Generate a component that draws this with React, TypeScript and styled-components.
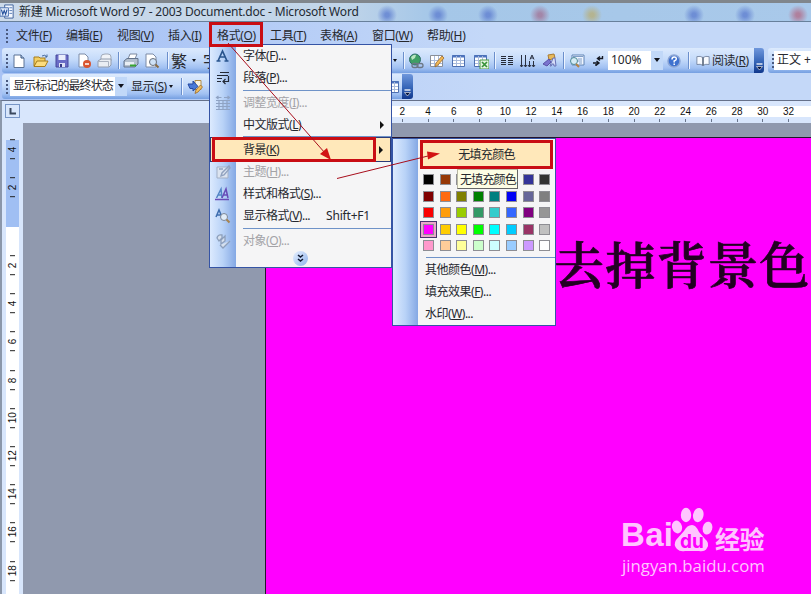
import React from "react";
import styled, { createGlobalStyle } from "styled-components";

const Global = createGlobalStyle`
  * { box-sizing: border-box; }
  body { margin: 0; overflow: hidden; }
`;

const UI = `"Noto Sans", "Noto Sans CJK SC", sans-serif`;

const Window = styled.div`
  position: relative;
  width: 811px;
  height: 594px;
  overflow: hidden;
  display: flex;
  flex-direction: column;
  background: #c4d8f8;
  font: 12px/16px ${UI};
  color: #26282e;
  white-space: nowrap;
`;
const TitleBar = styled.header`
  display: flex;
  align-items: center;
  height: 22px;
  padding: 0 0 1px 0;
  border-top: 3px solid #80868c;
  border-bottom: 1px solid #68809b;
  background:
    radial-gradient(circle at 438px 12px, #6585d2dd 0 2px, transparent 10px),
    radial-gradient(circle at 488px 12px, #6585d2dd 0 2px, transparent 10px),
    radial-gradient(circle at 540px 12px, #a27c9edd 0 2px, transparent 10px),
    radial-gradient(circle at 592px 12px, #b6b184dd 0 2px, transparent 10px),
    radial-gradient(circle at 387px 12px, #6585d2dd 0 2px, transparent 10px),
    radial-gradient(circle at 694px 12px, #6585d2dd 0 2px, transparent 10px),
    radial-gradient(circle at 745px 12px, #6585d2dd 0 2px, transparent 10px),
    radial-gradient(circle at 798px 12px, #b07592dd 0 2px, transparent 10px),
    radial-gradient(ellipse at 646px 12px, #86aace 0 8px, transparent 20px),
    radial-gradient(ellipse at 40px 18px, #e2b7dc 0 4px, transparent 18px),
    radial-gradient(ellipse at 235px 18px, #cebde5 0 4px, transparent 14px),
    linear-gradient(90deg, #ccdaea 0, #c1d5e9 340px, #a5c7e8 430px, #a9c9ea);
`;
const Title = styled.span`
  margin-left: 4px;
  letter-spacing: -0.19px;
  color: #232a33;
`;
const MenuBar = styled.nav`
  display: flex;
  align-items: center;
  height: 26px;
  padding: 1px 0 0 6px;
  background: linear-gradient(90deg, #a2bef4, #c4d8f8 60%);
`;
const Grip = styled.span`
  flex: none;
  width: 2px;
  height: 14px;
  background: repeating-linear-gradient(#4a5a80 0 2px, transparent 2px 4px);
`;
const MenuLabel = styled.span<{ $w: number }>`
  flex: none;
  width: ${(p) => p.$w}px;
  letter-spacing: -0.35px;
`;
const ToolRow = styled.div`
  display: flex;
  height: 26px;
  padding-left: 2px;
  background: linear-gradient(90deg, #a9c3f4, #c4d8f8 60%);
`;
const Band = styled.div<{ $w: number }>`
  flex: none;
  display: flex;
  align-items: center;
  width: ${(p) => p.$w}px;
  height: 25px;
  padding-left: 4px;
  border-radius: 3px 0 0 3px;
  background: linear-gradient(#dceafd, #c5dbfa 45%, #a0c0f2 80%, #759fe1);
`;
const Slot = styled.span<{ $w: number }>`
  flex: none;
  display: flex;
  align-items: center;
  justify-content: center;
  width: ${(p) => p.$w}px;
  height: 24px;
`;
const Divider = styled.span<{ $m?: number }>`
  flex: none;
  width: 1px;
  height: 17px;
  margin: 0 ${(p) => p.$m ?? 2}px;
  background: #6b8fcc;
  box-shadow: 1px 0 #edf4ff;
`;
const Field = styled.span<{ $w: number }>`
  flex: none;
  display: flex;
  align-items: center;
  width: ${(p) => p.$w}px;
  height: 19px;
  margin-bottom: 1px;
  padding-left: 3px;
  background: #fff;
  overflow: hidden;
`;
const DropButton = styled.span`
  flex: none;
  display: flex;
  align-items: center;
  justify-content: center;
  width: 12px;
  height: 19px;
  margin-left: auto;
  background: #c1d8f8;
`;
const Caret = styled.i<{ $s?: number }>`
  border: ${(p) => p.$s ?? 3}px solid transparent;
  border-top: ${(p) => (p.$s ?? 3) + 1}px solid #10131c;
  border-bottom: 0;
`;
const EndCap = styled.span<{ $w: number }>`
  flex: none;
  display: flex;
  align-items: flex-end;
  justify-content: center;
  width: ${(p) => p.$w}px;
  height: 25px;
  padding-bottom: 2px;
  border-radius: 0 3px 3px 0;
  background: linear-gradient(#6f97dc, #3565b7 55%, #10378c);
`;
const Label = styled.span<{ $ls?: number; $w?: number; $size?: number }>`
  flex: none;
  width: ${(p) => (p.$w ? p.$w + "px" : "auto")};
  font-size: ${(p) => p.$size ?? 12}px;
  letter-spacing: ${(p) => p.$ls ?? 0}px;
`;
const RulerRow = styled.div`
  display: flex;
  height: 23px;
  padding: 3px 0 0 4px;
  border-top: 1px solid #66718a;
  border-left: 2px solid #8b97aa;
  background: #d8e6fc;
`;
const TabBox = styled.div`
  flex: none;
  display: flex;
  align-items: center;
  justify-content: center;
  width: 15px;
  height: 14px;
  margin-left: -1px;
  border: 1px solid #7795c6;
`;
const HRuler = styled.div`
  flex: none;
  display: flex;
  margin: 2px 0 0 369.5px;
`;
const HMark = styled.div`
  flex: none;
  display: flex;
  flex-direction: column;
  align-items: center;
  width: 25.75px;
  height: 11px;
  background: #fff;
  font: 10px/11px "Liberation Sans", sans-serif;
  color: #111;
  &::after {
    content: "";
    flex: none;
    width: 1px;
    height: 3px;
    margin-top: 2px;
    background: #69758c;
  }
`;
const Workspace = styled.div`
  flex: 1;
  min-height: 0;
  display: flex;
  background: #9099ae;
`;
const VRuler = styled.aside`
  flex: none;
  width: 23px;
  padding: 17px 4px 0 4px;
  border-left: 2px solid #8b97aa;
  background: #d8e6fc;
`;
const VZone = styled.div<{ $top?: boolean }>`
  display: flow-root;
  height: ${(p) => (p.$top ? 87 : 400)}px;
  padding-top: ${(p) => (p.$top ? 0 : 19)}px;
  width: 13px;
  background: ${(p) => (p.$top ? "#a0bff3" : "#fff")};
`;
const VMark = styled.div<{ $first?: boolean }>`
  display: flex;
  align-items: center;
  justify-content: center;
  width: 13px;
  height: 38.2px;
  margin-top: ${(p) => (p.$first ? "-10px" : 0)};
  writing-mode: vertical-rl;
  transform: rotate(180deg);
  font: 10px/13px "Liberation Sans", sans-serif;
  color: #111;
  background: linear-gradient(#222, #222) 4px 9px / 5px 1px no-repeat,
    linear-gradient(#222, #222) 4px 28px / 5px 1px no-repeat;
`;
const Page = styled.main`
  flex: 1;
  min-width: 0;
  margin: 14px 0 0 242px;
  padding: 90px 0 0 288px;
  border-top: 1px solid #23142c;
  border-left: 1px solid #23142c;
  background: #ff00ff;
`;
const Heading = styled.h1`
  margin: 0;
  font: 600 50px/68px "Noto Serif CJK SC", "Noto Sans CJK SC", serif;
  letter-spacing: 1.3px;
  color: #220022;
  -webkit-text-stroke: 0.7px #220022;
`;

const Popup = styled.section<{ $x: number; $y: number; $w: number; $h: number; $strip: number }>`
  position: absolute;
  left: ${(p) => p.$x}px;
  top: ${(p) => p.$y}px;
  width: ${(p) => p.$w}px;
  height: ${(p) => p.$h}px;
  border: 1px solid #3554a5;
  background: linear-gradient(90deg, #dceafe, #b8d2f7 50%, #84a8e4) 0 0 /
      ${(p) => p.$strip}px 100% no-repeat,
    #f5f5f6;
`;
const MenuItem = styled.div<{ $off?: boolean; $hot?: boolean }>`
  display: flex;
  align-items: center;
  height: ${(p) => (p.$hot ? 23 : 22)}px;
  margin: ${(p) => (p.$hot ? "0 1px 0 1px" : 0)};
  padding-left: ${(p) => (p.$hot ? 0 : 1)}px;
  color: ${(p) => (p.$off ? "#a3a3a7" : "#26282e")};
  background: ${(p) => (p.$hot ? "#ffe8ba" : "transparent")};
  outline: ${(p) => (p.$hot ? "1px solid #2b3b78" : "none")};
  letter-spacing: -0.5px;
`;
const MenuIcon = styled.span`
  flex: none;
  display: flex;
  justify-content: center;
  width: 23px;
  margin-right: 9px;
`;
const Shortcut = styled.span`
  margin-left: 16px;
  letter-spacing: -0.2px;
`;
const SubArrow = styled.i`
  margin: 0 7px 0 auto;
  border: 4px solid transparent;
  border-left: 4px solid #111;
  border-right: 0;
`;
const Rule = styled.hr<{ $m: string }>`
  height: 1px;
  margin: ${(p) => p.$m};
  border: 0;
  background: #6f93c8;
`;
const More = styled.div`
  display: flex;
  align-items: center;
  justify-content: center;
  width: 15px;
  height: 15px;
  margin: -1px 0 0 83px;
  border-radius: 50%;
  background: linear-gradient(135deg, #e6f0ff, #8fb3ec);
`;
const NoFill = styled.div`
  display: flex;
  align-items: center;
  justify-content: center;
  width: 133px;
  height: 29px;
  margin: 1px 0 0 27px;
  background: #ffe8ba;
`;
const Palette = styled.div`
  display: grid;
  grid-template-columns: repeat(8, 16.6px);
  grid-auto-rows: 16.6px;
  margin: 2px 0 0 27px;
`;
const Cell = styled.span<{ $on?: boolean }>`
  display: flex;
  align-items: center;
  justify-content: center;
  width: 17px;
  height: 17px;
  border: ${(p) => (p.$on ? "1px solid #47366e" : "1px solid transparent")};
  background: ${(p) => (p.$on ? "#e9a7c9" : "transparent")};
`;
const Chip = styled.span<{ $c: string }>`
  width: 11px;
  height: 11px;
  border: 1px solid #8e8e94;
  background: ${(p) => p.$c};
`;
const SubItem = styled.div`
  height: 22px;
  padding: 4px 0 0 32px;
  letter-spacing: -0.5px;
`;
const Tooltip = styled.div`
  position: absolute;
  left: 457px;
  top: 169px;
  width: 61px;
  height: 20px;
  padding: 2px 0 0 2px;
  border: 1px solid #b8b8a4;
  border-right-color: #666;
  border-bottom-color: #666;
  background: #fdfde4;
  letter-spacing: -0.8px;
`;
const RedBox = styled.div<{ $x: number; $y: number; $w: number; $h: number }>`
  position: absolute;
  left: ${(p) => p.$x}px;
  top: ${(p) => p.$y}px;
  width: ${(p) => p.$w}px;
  height: ${(p) => p.$h}px;
  border: 3px solid #c90d14;
`;
const Arrows = styled.svg`
  position: absolute;
  left: 0;
  top: 0;
`;
const Watermark = styled.div`
  position: absolute;
  left: 621px;
  top: 503px;
  width: 150px;
  color: #ffc5ff;
`;
const Brand = styled.div`
  display: flex;
  height: 50px;
  align-items: flex-end;
`;
const Bai = styled.span`
  flex: none;
  width: 50px;
  font: 700 33px/36px "Liberation Sans", sans-serif;
  letter-spacing: 0.3px;
`;
const Jing = styled.span`
  margin-left: 1px;
  font: 700 25px/30px "Noto Sans CJK SC", sans-serif;
  letter-spacing: -0.5px;
`;
const Url = styled.div`
  margin: 2px 0 0 1px;
  font: 16.8px/22px "Open Sans", sans-serif;
`;

const Ico = ({ children, s = 16 }: { children: React.ReactNode; s?: number }) => (
  <svg width={s} height={s} viewBox="0 0 16 16" fill="none">{children}</svg>
);
const WordIcon = () => (
  <Ico s={15}>
    <path d="M5 1h9v14H5z" fill="#f4f8ff" stroke="#3c5f99" />
    <path d="M10 4h3M10 7h3M10 10h3" stroke="#5b7fb8" />
    <path d="M0 4h9v9H0z" fill="#e5eefc" stroke="#4a6fae" />
    <path d="m1.500 6 1.500 5 1.500-4L6 11l1.500-5" stroke="#24509b" strokeWidth="1.200" />
  </Ico>
);
const NewIcon = () => (
  <Ico><path d="M3 2h7l3 3v9.500H3z" fill="#fff" stroke="#5b7396" /><path d="M10 2v3h3" fill="#bcd0ee" stroke="#35527d" /></Ico>
);
const OpenIcon = () => (
  <Ico><path d="M1 13V4h5l1 1h5v3" fill="#f3cf62" stroke="#a67c1c" /><path d="M1 13.500 4 8h11l-3 5.500z" fill="#fbdc7e" stroke="#a67c1c" /><path d="M9 3q3-2 5 1m0-2.500V4h-2" stroke="#476a9d" /></Ico>
);
const SaveIcon = () => (
  <Ico><path d="M2 2h12v12H2z" fill="#6a6cc6" stroke="#46489c" /><path d="M4.500 2h7v5h-7z" fill="#e9edfb" /><path d="M5 10h6v4H5z" fill="#dde1f5" /><path d="M6 11h2v3H6z" fill="#343783" /></Ico>
);
const PermIcon = () => (
  <Ico><path d="M3 1h6l3 3v10H3z" fill="#fff" stroke="#7c8ba6" /><circle cx="11" cy="11" r="4" fill="#d9542f" /><path d="M9 11h4" stroke="#fff" strokeWidth="1.500" /></Ico>
);
const MailIcon = () => (
  <Ico><path d="M4 7V4q0-3 4-3h3q3 0 3 3v4" fill="#f0f3f8" stroke="#a0a9b8" /><path d="M1 8l3-2h10v6l-2 2H1z" fill="#e9edf3" stroke="#929cae" /><path d="M1 8.500h10.500V14" stroke="#aab2c0" /></Ico>
);
const PrintIcon = () => (
  <Ico><path d="M5 6 7 1h7l-2 5" fill="#fff" stroke="#7c89a0" /><path d="m1 8 3-2.500h11V11l-3 3H1z" fill="#b3bfce" stroke="#64748d" /><path d="M2 9h9v3H2z" fill="#e9eef4" /><path d="M7 12.500h6" stroke="#37a532" strokeWidth="2" /></Ico>
);
const PreviewIcon = () => (
  <Ico><path d="M2 1h7l3 3v10H2z" fill="#fff" stroke="#7c8ba6" /><circle cx="9" cy="9" r="3.500" fill="#cfe2f6" stroke="#69717e" /><path d="m11.500 11.500 3 3" stroke="#8a6b42" strokeWidth="2" /></Ico>
);
const GlobeIcon = () => (
  <Ico><circle cx="7" cy="6.500" r="5.500" fill="#3f9f64" stroke="#2f6f6c" /><path d="M3 4q3-3 5-2L7 5 4 7z" fill="#b9e6c0" /><rect x="4" y="10.500" width="6" height="4" rx="2" stroke="#6c7785" strokeWidth="1.300" /><rect x="9" y="10.500" width="6" height="4" rx="2" stroke="#6c7785" strokeWidth="1.300" /></Ico>
);
const TableIcon = ({ extra }: { extra?: "pen" | "xls" }) => (
  <Ico>
    <path d="M1.500 2.500h12v11h-12z" fill="#fff" stroke={extra === "pen" ? "#8a8f98" : "#4d6fb0"} />
    {extra !== "pen" && <path d="M1 3.500h13" stroke="#4d74c0" strokeWidth="2" />}
    <path d="M5.500 3v10M9.500 3v10M2 7.500h11M2 10.500h11" stroke="#a9bbdc" />
    {extra === "pen" && <path d="m6 14 1-4 6-7 2 2-6 7z" fill="#f0b855" stroke="#9a6a31" strokeWidth=".8" />}
    {extra === "xls" && <g><path d="M7 7h9v9H7z" fill="#e5f4e1" stroke="#4c9a46" /><path d="m9 9 5 5m0-5-5 5" stroke="#37923a" strokeWidth="1.700" /></g>}
  </Ico>
);
const ColumnsIcon = () => (
  <Ico><path d="M2 3.500h5M2 5.500h5M2 7.500h5M2 9.500h5M2 11.500h5M9 3.500h5M9 5.500h5M9 7.500h5M9 9.500h5M9 11.500h5" stroke="#252a36" strokeWidth="1.200" /></Ico>
);
const DirectionIcon = () => (
  <Ico><path d="M1.500 2v12M5.500 2v12M9.500 8v6M13.500 8v6M10 6.500 12 2l2 4.500M10.500 5h3M0 12l1.500 2L3 12M4 12l1.500 2L7 12M8 12l1.500 2 1.500-2M12 12l1.500 2 1.500-2" stroke="#2b3140" /></Ico>
);
const DrawIcon = () => (
  <Ico><path d="m6 2 6-1 1 4-6 2z" fill="#e7b95b" stroke="#aa7c32" /><path d="m1 11 6-5 2 3-4 4z" fill="#7a73ce" stroke="#5951a5" /><path d="m8 13 3-8h2l1 8h-2l-.3-2H10l-.8 2z" fill="#d5dcf8" stroke="#6770b5" /></Ico>
);
const MapIcon = () => (
  <Ico><path d="M3 2h12v10H3z" fill="#eff5ff" stroke="#6184b5" /><path d="M4 3.500h10M9 6h4M9 8h4M10 10h3" stroke="#809fc8" /><circle cx="5" cy="8" r="3.500" fill="#d5ecf5" stroke="#4b8996" /><path d="m7 11 3 3" stroke="#b48445" strokeWidth="2" /></Ico>
);
const MarkIcon = () => (
  <Ico><path d="M12.500 3v2.500H8M10 3.500 7.500 5.500l2.500 2M3 10h6M6.500 8 9 10l-2.500 2M6 11v2" stroke="#161a24" strokeWidth="1.400" /></Ico>
);
const HelpIcon = () => (
  <Ico><circle cx="8" cy="8" r="6" fill="#3f72cf" stroke="#8ba5d5" strokeWidth="1.500" /><path d="M6 6.500q0-2.500 2.200-2.500T10.300 6Q10.300 7.300 8.200 8v1.500m0 1v1.500" stroke="#fff" strokeWidth="1.500" /></Ico>
);
const BookIcon = () => (
  <Ico s={14}><path d="M8 4Q5 2 1 3v9q4-1 7 1 3-2 7-1V3q-4-1-7 1z" fill="#f7faff" stroke="#70809d" /><path d="M8 4v9" stroke="#35465e" strokeWidth="1.500" /></Ico>
);
const TrackIcon = () => (
  <Ico><path d="M8 1.500h6v9H8z" fill="#f8f3e2" stroke="#b28c45" /><path d="M1 5h5V2l5 5.500L6 12V9.500H3z" fill="#4a7ad8" stroke="#2549a0" /><path d="m8 14.500 1-3.500 4.500-5 2 2-4.500 5z" fill="#f1bf62" stroke="#9b6a24" strokeWidth=".8" /></Ico>
);
const GlyphA = ({ double }: { double?: boolean }) =>
  double ? (
    <Ico><path d="m1.500 12 4.500-9 1 9M3 9h4" stroke="#5284c5" strokeWidth="1.500" /><path d="m7 12 4-9 2 9M8.500 9h4" stroke="#684bb7" strokeWidth="1.500" /><path d="M0 13.500h14" stroke="#684bb7" strokeWidth="1.500" /></Ico>
  ) : (
    <Ico><path d="m3 13 4.500-10L12 13M5 9h5M1.500 13h4M9.500 13h4" stroke="#2a558e" strokeWidth="1.700" /></Ico>
  );
const ParaIcon = () => (
  <Ico><path d="M5 2.500h9M2 5.500h11M2 8.500h5M2 11.500h4M13.500 6v5.500H8M10.500 9 8 11.500l2.500 2.500" stroke="#222936" strokeWidth="1.200" /></Ico>
);
const AdjustIcon = () => (
  <Ico><path d="M1.500 2.500h5M9 2.500h5.500M3.500 1 1.500 2.500 3.500 4M12.500 1l2 1.500-2 1.500M1 5.500h14M1 8.500h14M1 11.500h14M1 14.500h14M4 5v10M8 5v10M12 5v10" stroke="#8fa3c4" strokeWidth="1.200" /></Ico>
);
const ThemeIcon = () => (
  <Ico><path d="M2 3h11v11H2z" fill="#dce4f0" stroke="#a2afc5" /><path d="m6 12 1-3 7-7 1 2-6 7zM4 5h4" stroke="#91a2bf" strokeWidth="1.400" /></Ico>
);
const FormatIcon = () => (
  <Ico><path d="m1 9 3-7 3 7M2 7h4" stroke="#3d6dae" strokeWidth="1.500" /><circle cx="9" cy="9" r="3.500" fill="#e2edf8" stroke="#7c8696" /><path d="m11.500 11.500 3 3" stroke="#a78350" strokeWidth="2" /></Ico>
);
const ObjectIcon = () => (
  <Ico><path d="M2 5q1-4 5-3v3L4 8zM6 7l4-4v5l-4 3zM5 12l3 3 7-7" fill="#d6e0ee" stroke="#8d9fbb" strokeWidth="1.300" /></Ico>
);
const DownChevrons = () => (
  <svg width="7" height="9" viewBox="0 0 7 9" fill="none"><path d="m1 1 2.500 2L6 1M1 5l2.500 2L6 5" stroke="#111a33" strokeWidth="1.500" /></svg>
);
const OptionsMark = () => (
  <svg width="7" height="8" viewBox="0 0 7 8"><path d="M.5 1h6" stroke="#fff" strokeWidth="1.300" /><path d="M.5 3.500h6l-3 3.500z" fill="#06143c" stroke="#fff" strokeWidth=".6" /></svg>
);

const Cmd = ({ t, k, dots }: { t: string; k: string; dots?: boolean }) => (
  <span>{t}(<u>{k}</u>){dots && "..."}</span>
);

const menus: [string, string, number][] = [
  ["文件", "F", 50], ["编辑", "E", 51], ["视图", "V", 51], ["插入", "I", 49], ["格式", "O", 53],
  ["工具", "T", 50], ["表格", "A", 52], ["窗口", "W", 55], ["帮助", "H", 45],
];
const colors = [
  "#000000", "#963706", "#333300", "#003300", "#003366", "#000080", "#333399", "#333333",
  "#800000", "#ff6a10", "#808000", "#008000", "#008080", "#0000f5", "#666699", "#808080",
  "#fa0000", "#ff9d09", "#99cc00", "#339966", "#33cccc", "#3366ff", "#800080", "#969696",
  "#ff00ff", "#ffcc00", "#ffff00", "#00ff00", "#00ffff", "#00ccff", "#993366", "#c0c0c0",
  "#ff99cc", "#ffcc99", "#ffff99", "#ccffcc", "#ccffff", "#99ccff", "#cc99ff", "#ffffff",
];
const hMarks = [2, 4, 6, 8, 10, 12, 14, 16, 18, 20, 22, 24, 26, 28, 30, 32, ""];
const vMarks = [2, 4, 6, 8, 10, 12, 14, 16, 18];

export default function App() {
  return (
    <Window>
      <Global />
      <TitleBar>
        <WordIcon />
        <Title>新建 Microsoft Word 97 - 2003 Document.doc - Microsoft Word</Title>
      </TitleBar>
      <MenuBar>
        <Grip />
        <Slot $w={8} />
        {menus.map(([t, k, w]) => (
          <MenuLabel key={k} $w={w}><Cmd t={t} k={k} /></MenuLabel>
        ))}
      </MenuBar>
      <ToolRow>
        <Band $w={752}>
          <Grip />
          <Slot $w={22}><NewIcon /></Slot>
          <Slot $w={21}><OpenIcon /></Slot>
          <Slot $w={22}><SaveIcon /></Slot>
          <Slot $w={21}><PermIcon /></Slot>
          <Slot $w={22}><MailIcon /></Slot>
          <Divider />
          <Slot $w={19}><PrintIcon /></Slot>
          <Slot $w={24}><PreviewIcon /></Slot>
          <Divider $m={3} />
          <Label $size={16} $w={21}>繁</Label>
          <Caret $s={2} />
          <Slot $w={7} />
          <Label $size={16} $w={190}>字</Label>
          <Caret $s={2} />
          <Slot $w={4} />
          <Divider />
          <Slot $w={20}><GlobeIcon /></Slot>
          <Slot $w={22}><TableIcon extra="pen" /></Slot>
          <Slot $w={22}><TableIcon /></Slot>
          <Slot $w={22}><TableIcon extra="xls" /></Slot>
          <Divider />
          <Slot $w={20}><ColumnsIcon /></Slot>
          <Slot $w={22}><DirectionIcon /></Slot>
          <Slot $w={22}><DrawIcon /></Slot>
          <Divider />
          <Slot $w={21}><MapIcon /></Slot>
          <Slot $w={21}><MarkIcon /></Slot>
          <Field $w={55}>
            <Label>100%</Label>
            <DropButton><Caret /></DropButton>
          </Field>
          <Slot $w={21}><HelpIcon /></Slot>
          <Divider $m={4} />
          <Slot $w={19}><BookIcon /></Slot>
          <Label $ls={-0.4}><Cmd t="阅读" k="R" /></Label>
        </Band>
        <EndCap $w={10}><OptionsMark /></EndCap>
        <Slot $w={4} />
        <Band $w={50}>
          <Grip />
          <Field $w={50}><Label>正文 +</Label></Field>
        </Band>
      </ToolRow>
      <ToolRow>
        <Band $w={400}>
          <Grip />
          <Slot $w={2} />
          <Field $w={117}>
            <Label $ls={-0.9}>显示标记的最终状态</Label>
            <DropButton><Caret /></DropButton>
          </Field>
          <Slot $w={4} />
          <Label $w={38} $ls={-0.4}><Cmd t="显示" k="S" /></Label>
          <Caret $s={2.5} />
          <Slot $w={6} />
          <Divider />
          <Slot $w={21}><TrackIcon /></Slot>
          <Slot $w={180} />
          <Slot $w={16}><TableIcon /></Slot>
        </Band>
        <EndCap $w={11}><OptionsMark /></EndCap>
      </ToolRow>
      <RulerRow>
        <TabBox><svg width="7" height="7"><path d="M1.500 0v5.500H7" fill="none" stroke="#3b485e" strokeWidth="2" /></svg></TabBox>
        <HRuler>{hMarks.map((n, i) => <HMark key={i}>{n}</HMark>)}</HRuler>
      </RulerRow>
      <Workspace>
        <VRuler>
          <VZone $top>
            <VMark $first>4</VMark>
            <VMark>2</VMark>
          </VZone>
          <VZone>
            {vMarks.map((n) => <VMark key={n}>{n}</VMark>)}
          </VZone>
        </VRuler>
        <Page><Heading>去掉背景色</Heading></Page>
      </Workspace>

      <Popup $x={209} $y={44} $w={183} $h={224} $strip={26}>
        <MenuItem><MenuIcon><GlyphA /></MenuIcon><Cmd t="字体" k="F" dots /></MenuItem>
        <MenuItem><MenuIcon><ParaIcon /></MenuIcon><Cmd t="段落" k="P" dots /></MenuItem>
        <Rule $m="1px 0 1px 33px" />
        <MenuItem $off><MenuIcon><AdjustIcon /></MenuIcon><Cmd t="调整宽度" k="I" dots /></MenuItem>
        <MenuItem><MenuIcon /><Cmd t="中文版式" k="L" /><SubArrow /></MenuItem>
        <Rule $m="0 0 1px 33px" />
        <MenuItem $hot><MenuIcon /><Cmd t="背景" k="K" /><SubArrow /></MenuItem>
        <MenuItem $off><MenuIcon><ThemeIcon /></MenuIcon><Cmd t="主题" k="H" dots /></MenuItem>
        <MenuItem><MenuIcon><GlyphA double /></MenuIcon><Cmd t="样式和格式" k="S" dots /></MenuItem>
        <MenuItem><MenuIcon><FormatIcon /></MenuIcon><Cmd t="显示格式" k="V" dots /><Shortcut>Shift+F1</Shortcut></MenuItem>
        <Rule $m="1px 0 1px 33px" />
        <MenuItem $off><MenuIcon><ObjectIcon /></MenuIcon><Cmd t="对象" k="O" dots /></MenuItem>
        <More><DownChevrons /></More>
      </Popup>

      <Popup $x={392} $y={138} $w={164} $h={188} $strip={25}>
        <NoFill><Label $ls={-0.7}>无填充颜色</Label></NoFill>
        <Palette>
          {colors.map((c, i) => (
            <Cell key={i} $on={i === 24}><Chip $c={c} /></Cell>
          ))}
        </Palette>
        <Rule $m="3px 0 0 33px" />
        <SubItem><Cmd t="其他颜色" k="M" dots /></SubItem>
        <SubItem><Cmd t="填充效果" k="F" dots /></SubItem>
        <SubItem><Cmd t="水印" k="W" dots /></SubItem>
      </Popup>
      <Tooltip>无填充颜色</Tooltip>

      <RedBox $x={209} $y={22} $w={54} $h={25} />
      <RedBox $x={212} $y={137} $w={164} $h={25} />
      <RedBox $x={420} $y={140} $w={133} $h={29} />
      <Arrows width="811" height="594" fill="#d21414" stroke="#a80e1c">
        <path d="M228 43 325 153M337 178.500 430 155.500" />
        <path d="m331 160-11-6 7-6zM440 153.500l-12 6-1-8z" stroke="none" />
      </Arrows>

      <Watermark>
        <Brand>
          <Bai>Bai</Bai>
          <svg width="43" height="48" viewBox="0 0 43 48" fill="#ffc5ff">
            <ellipse cx="6" cy="22" rx="5" ry="6.500" transform="rotate(-15 6 22)" />
            <ellipse cx="15" cy="10" rx="5.200" ry="7.200" />
            <ellipse cx="27.500" cy="10" rx="5.200" ry="7.200" transform="rotate(12 27 9)" />
            <ellipse cx="36.500" cy="23" rx="4.800" ry="6.500" transform="rotate(15 36 23)" />
            <path d="M21 20q-5 0-8 6l-8 9q-3 5 1 9 3 3 8 2h14q6 1 8-3 3-5-2-9l-6-7q-3-7-7-7z" />
            <text x="9" y="43" fontFamily="Inter" fontWeight="700" fontSize="19" fill="#f0f">du</text>
          </svg>
          <Jing>经验</Jing>
        </Brand>
        <Url>jingyan.baidu.com</Url>
      </Watermark>
    </Window>
  );
}
